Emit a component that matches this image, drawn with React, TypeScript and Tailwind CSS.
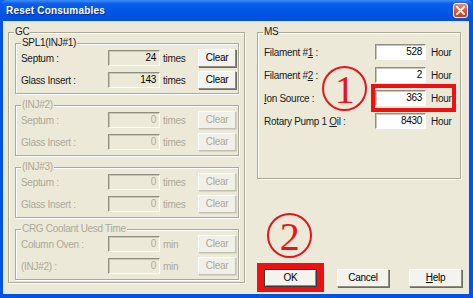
import React from "react";

const FONT = "font-['Liberation_Sans',Arial,sans-serif]";

function Field({ value, white, disabled, w }: { value: string; white?: boolean; disabled?: boolean; w: string }) {
  return (
    <div
      className={`${w} h-[16px] shrink-0 flex items-center justify-end pr-[3px] border border-t-[#8f8c80] border-l-[#8f8c80] border-b-white border-r-white shadow-[inset_1px_1px_0_#c9c6b8] leading-none ${
        white ? "bg-white" : "bg-[#ECE9D8]"
      } ${disabled ? "text-[#aca899]" : "text-black"}`}
    >
      {value}
    </div>
  );
}

function Btn({ children, disabled, w, def }: { children: React.ReactNode; disabled?: boolean; w: string; def?: boolean }) {
  const inner = (
    <div
      className={`flex-1 self-stretch flex items-center justify-center border border-t-white border-l-white ${
        disabled
          ? "border-b-[#c4c1b3] border-r-[#c4c1b3] text-[#aca899] bg-[#f0efe8]"
          : "border-b-[#8f8c80] border-r-[#8f8c80] text-black bg-[#f4f3ee]"
      } leading-none`}
    >
      {children}
    </div>
  );
  return (
    <div
      className={`${w} h-[18px] shrink-0 flex ${
        def ? "border border-[#3a3a3a]" : disabled ? "shadow-[1px_1px_0_#d6d3c5]" : "shadow-[1px_1px_0_#6f6d62]"
      }`}
    >
      {inner}
    </div>
  );
}

function Group({ title, disabled, className, children }: { title: string; disabled?: boolean; className: string; children: React.ReactNode }) {
  return (
    <div className={`relative border border-[#aca899] shadow-[inset_1px_1px_0_#fff,1px_1px_0_#fff] ${className}`}>
      <span
        className={`absolute top-[-7px] left-[5px] bg-[#ECE9D8] px-[1px] leading-[12px] ${disabled ? "text-[#aca899]" : "text-[#1a1a1a]"}`}
      >
        {title}
      </span>
      {children}
    </div>
  );
}

function GcRow({ label, value, unit, disabled }: { label: string; value: string; unit: string; disabled?: boolean }) {
  const c = disabled ? "text-[#aca899]" : "text-[#1a1a1a]";
  return (
    <div className="flex items-center h-[16px]">
      <span className={`w-[92px] pl-[5px] shrink-0 ${c}`}>{label}</span>
      <Field w="w-[52px]" value={value} disabled={disabled} />
      <span className={`ml-[3px] w-[35px] shrink-0 ${c}`}>{unit}</span>
      <Btn w="w-[38px]" disabled={disabled}>
        Clear
      </Btn>
    </div>
  );
}

function SubGroup({ title, disabled, rows }: { title: string; disabled?: boolean; rows: [string, string, string][] }) {
  return (
    <Group title={title} disabled={disabled} className="h-[51px] pt-[6px] pr-[3px] flex flex-col gap-[6px]">
      {rows.map((r, i) => (
        <GcRow key={i} label={r[0]} value={r[1]} unit={r[2]} disabled={disabled} />
      ))}
    </Group>
  );
}

function MsRow({ label, value, children }: { label: React.ReactNode; value: string; children?: React.ReactNode }) {
  return (
    <div className="flex items-center h-[16px]">
      <span className="w-[117px] pl-[6px] shrink-0 text-[#1a1a1a]">{label}</span>
      <div className="relative flex items-center">
        {children}
        <Field w="w-[51px]" value={value} white />
        <span className="ml-[5px] text-[#1a1a1a]">Hour</span>
      </div>
    </div>
  );
}

function Circled({ n, className }: { n: string; className: string }) {
  return (
    <div
      className={`absolute w-[45px] h-[45px] rounded-full border-2 border-[#e8141c] flex items-center justify-center text-[#e8141c] font-['Liberation_Serif',serif] text-[40px] leading-none ${className}`}
    >
      <span className="mt-[2px]">{n}</span>
    </div>
  );
}

export default function App() {
  return (
    <div className={`w-[473px] h-[298px] flex flex-col bg-[#0054e3] text-[10px] tracking-[-0.3px] ${FONT} overflow-hidden`}>
      {/* title bar */}
      <div className="h-[21px] shrink-0 flex items-center justify-between pl-[6px] pr-[5px] rounded-t-[6px] bg-[linear-gradient(to_bottom,#3d8dff_0%,#0a5ee9_18%,#0055e5_60%,#0050dc_100%)]">
        <span className="text-white font-bold text-[10px] tracking-[0.2px] [text-shadow:1px_1px_0_#0a2a8a]">
          Reset Consumables
        </span>
        <div className="w-[15px] h-[15px] rounded-[3px] border border-white bg-[linear-gradient(to_bottom,#ee8a6e,#d9542f_60%,#c7401d)] flex items-center justify-center">
          <svg width="9" height="9" viewBox="0 0 9 9">
            <path d="M1 1 L8 8 M8 1 L1 8" stroke="white" strokeWidth="1.8" strokeLinecap="square" />
          </svg>
        </div>
      </div>
      {/* body */}
      <div className="flex-1 flex border-l-[3px] border-r-[4px] border-b-[4px] border-[#0054e3] bg-[#ECE9D8]">
        <div className="flex-1 flex items-start pt-[11px] pl-[5px] gap-[12px]">
          {/* GC */}
          <Group title="GC" className="w-[237px] h-[251px] pt-[10px] pl-[6px] pr-[5px] flex flex-col gap-[11px]">
            <SubGroup
              title="SPL1(INJ#1)"
              rows={[
                ["Septum :", "24", "times"],
                ["Glass Insert :", "143", "times"],
              ]}
            />
            <SubGroup
              title="(INJ#2)"
              disabled
              rows={[
                ["Septum :", "0", "times"],
                ["Glass Insert :", "0", "times"],
              ]}
            />
            <SubGroup
              title="(INJ#3)"
              disabled
              rows={[
                ["Septum :", "0", "times"],
                ["Glass Insert :", "0", "times"],
              ]}
            />
            <SubGroup
              title="CRG Coolant Uesd Time"
              disabled
              rows={[
                ["Column Oven :", "0", "min"],
                ["(INJ#2) :", "0", "min"],
              ]}
            />
          </Group>
          {/* right column */}
          <div className="relative w-[204px] flex flex-col">
            <Group title="MS" className="h-[147px] pt-[11px] flex flex-col gap-[7px]">
              <MsRow
                label={
                  <>
                    Filament #<u>1</u> :
                  </>
                }
                value="528"
              />
              <MsRow
                label={
                  <>
                    Filament #<u>2</u> :
                  </>
                }
                value="2"
              />
              <MsRow
                label={
                  <>
                    <u>I</u>on Source :
                  </>
                }
                value="363"
              >
                <div className="absolute left-[-4px] top-[-6px] w-[85px] h-[28px] border-4 border-[#ee1111]" />
              </MsRow>
              <MsRow
                label={
                  <>
                    Rotary Pump 1 <u>O</u>il :
                  </>
                }
                value="8430"
              />
            </Group>
            <Circled n="1" className="left-[65px] top-[34px]" />
            <Circled n="2" className="left-[10px] top-[181px]" />
            <div className="mt-[90px] pl-[7px] flex gap-[20px]">
              <div className="relative flex">
                <div className="absolute left-[-7px] top-[-6px] w-[67px] h-[29px] bg-[#ee1111]" />
                <div className="relative flex">
                  <Btn w="w-[53px]" def>
                    OK
                  </Btn>
                </div>
              </div>
              <Btn w="w-[52px]">Cancel</Btn>
              <Btn w="w-[53px]">
                <span>
                  <u>H</u>elp
                </span>
              </Btn>
            </div>
          </div>
        </div>
      </div>
    </div>
  );
}
